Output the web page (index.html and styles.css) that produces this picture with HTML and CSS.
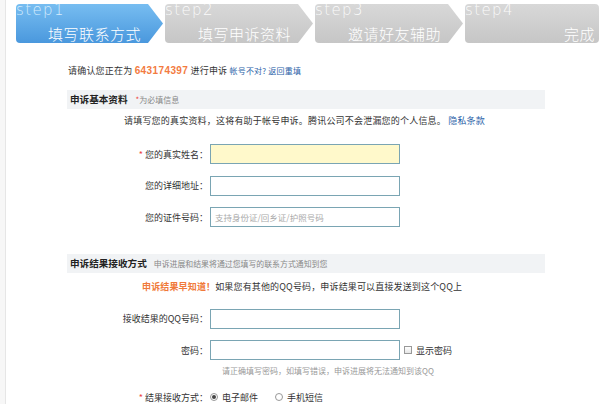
FILE: index.html
```html
<!DOCTYPE html>
<html lang="zh-CN">
<head>
<meta charset="utf-8">
<title>申诉</title>
<link rel="stylesheet" href="styles.css">
</head>
<body>
<div class="page">
  <div class="gutter"></div>
  <div class="main">
    <div class="steps">
      <div class="step step-active arrow">
        <div class="step-en">step1</div>
        <div class="step-cn">填写联系方式</div>
      </div>
      <div class="step arrow">
        <div class="step-en">step2</div>
        <div class="step-cn">填写申诉资料</div>
      </div>
      <div class="step arrow">
        <div class="step-en">step3</div>
        <div class="step-cn">邀请好友辅助</div>
      </div>
      <div class="step step-last">
        <div class="step-en">step4</div>
        <div class="step-cn">完成</div>
      </div>
    </div>

    <div class="content">
      <p class="confirm">请确认您正在为 <b class="qq">643174397</b> 进行申诉 <a class="link small" href="#">帐号不对? 返回重填</a></p>

      <div class="sec-head"><b>申诉基本资料</b><span class="sec-note"><i class="star">*</i>为必填信息</span></div>
      <p class="intro">请填写您的真实资料，这将有助于帐号申诉。腾讯公司不会泄漏您的个人信息。 <a class="link" href="#">隐私条款</a></p>

      <div class="form form-basic">
        <div class="row"><label class="lbl"><i class="star">*</i> 您的真实姓名：</label><input class="ipt ipt-focus" type="text"></div>
        <div class="row"><label class="lbl">您的详细地址：</label><input class="ipt" type="text"></div>
        <div class="row"><label class="lbl">您的证件号码：</label><input class="ipt" type="text" placeholder="支持身份证/回乡证/护照号码"></div>
      </div>

      <div class="sec-head sec-head-2"><b>申诉结果接收方式</b><span class="sec-desc">申诉进展和结果将通过您填写的联系方式通知到您</span></div>
      <p class="tip"><b class="orange">申诉结果早知道！</b>如果您有其他的QQ号码，申诉结果可以直接发送到这个QQ上</p>

      <div class="form form-result">
        <div class="row"><label class="lbl">接收结果的QQ号码：</label><input class="ipt" type="text"></div>
        <div class="row"><label class="lbl">密码：</label><input class="ipt" type="password"><span class="check"><span class="box"></span>显示密码</span></div>
      </div>
      <p class="hint">请正确填写密码，如填写错误，申诉进展将无法通知到该QQ</p>
      <div class="row row-radio">
        <label class="lbl"><i class="star">*</i> 结果接收方式：</label>
        <span class="radio on"></span><span class="opt">电子邮件</span>
        <span class="radio"></span><span class="opt">手机短信</span>
      </div>
    </div>
  </div>
</div>
</body>
</html>
```

FILE: styles.css
```css
* { box-sizing: border-box; }
html, body { margin: 0; padding: 0; background: #fff; }
body {
  font-family: "Noto Sans CJK SC", "Liberation Sans", sans-serif;
  font-size: 9px;
  color: #333;
  overflow: hidden;
}
p { margin: 0; }
i { font-style: normal; }
a { text-decoration: none; }

.page { display: flex; min-height: 404px; }
.gutter { width: 6px; background: #f7f7f7; border-right: 1px solid #e6e6e6; flex: none; }
.main { flex: 1; }

/* steps */
.steps { display: flex; gap: 2px; margin: 4px 0 0 10px; }
.step {
  width: 148px; height: 39px;
  background: linear-gradient(#d8d8d8, #c6c6c6);
  border-radius: 4px 0 0 4px;
  color: #fbfbfb;
}
.step.arrow { clip-path: polygon(0 0, calc(100% - 15px) 0, 100% 50%, calc(100% - 15px) 100%, 0 100%); padding-right: 22px; }
.step-active { width: 147px; background: linear-gradient(#77bdf1, #4a98dd); }
.step-last { width: 134px; border-radius: 4px; padding-right: 4px; }
.step-en {
  font-family: "DejaVu Sans", sans-serif;
  font-weight: 200;
  font-size: 15px; line-height: 12px;
  letter-spacing: 1.4px;
  padding-top: 0;
  color: rgba(255,255,255,0.92);
}
.step-active .step-en { color: #d6ecfc; }
.step-cn {
  font-weight: 300;
  font-size: 15px; line-height: 15px;
  letter-spacing: 0.5px;
  text-align: right;
  margin-top: 10px;
  color: #fff;
}

/* content */
.content { margin-left: 61px; width: 478px; }
.confirm { margin-top: 21px; line-height: 14px; padding-left: 1px; letter-spacing: 0.2px; }
.qq { font-family: "Liberation Sans", sans-serif; font-size: 10px; letter-spacing: 0.4px; color: #f37b3f; }
.link { color: #2b62a8; }
.small { font-size: 8px; }

.sec-head { margin-top: 12px; height: 19px; line-height: 19px; background: #f1f3f5; padding-left: 3px; }
.sec-head b { font-size: 9.6px; color: #222; }
.sec-note { font-size: 8px; color: #888; margin-left: 8px; }
.star { color: #e44; }
.sec-head-2 { margin-top: 27px; }
.sec-desc { font-size: 7.9px; color: #888; margin-left: 7px; }

.intro { margin-top: 5px; line-height: 14px; padding-left: 57px; letter-spacing: 0.2px; }

.form { display: flex; flex-direction: column; gap: 11.5px; }
.form-basic { margin-top: 16px; }
.row { display: flex; align-items: center; height: 20px; }
.lbl { width: 141px; text-align: right; flex: none; }
.ipt {
  margin: 0 0 0 2px;
  width: 190px; height: 20px;
  border: 1px solid #7aa5b3;
  background: #fff;
  font-family: inherit; font-size: 8.5px;
  padding: 0 4px;
  outline: none;
}
.ipt-focus { background: #fff9cb; }
.ipt::placeholder { color: #aaa; }

.tip { margin-top: 7px; line-height: 14px; padding-left: 75px; letter-spacing: 0.15px; }
.orange { color: #f07a3a; }
.form-result { margin-top: 14.5px; }

.check { display: flex; align-items: center; margin-left: 4px; }
.box { width: 8px; height: 8px; border: 1px solid #999; background: linear-gradient(#fff, #e6e6e6); margin-right: 4px; }

.hint { margin-top: 5px; line-height: 12px; padding-left: 155px; font-size: 8px; color: #999; }

.row-radio { margin-top: 13px; height: 14px; }
.radio { width: 8px; height: 8px; border: 1px solid #999; border-radius: 50%; margin-left: 2px; margin-right: 4px; background: #fff; position: relative; flex: none; }
.radio.on::after { content: ""; position: absolute; left: 1px; top: 1px; width: 4px; height: 4px; border-radius: 50%; background: #444; }
.opt { margin-right: 15px; }
```
